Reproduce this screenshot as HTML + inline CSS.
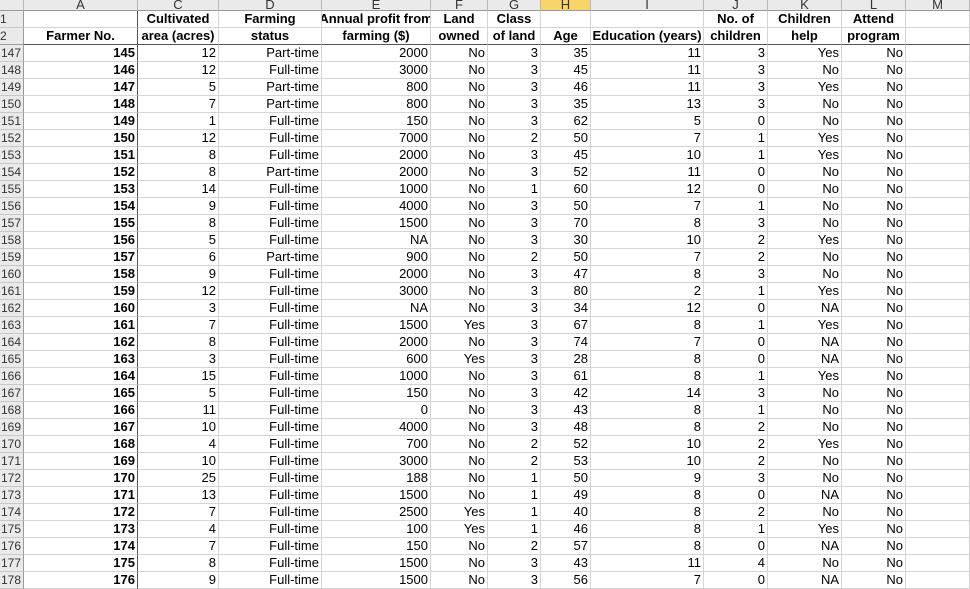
<!DOCTYPE html>
<html><head><meta charset="utf-8"><style>
*{margin:0;padding:0}
body{width:970px;height:589px;overflow:hidden;background:#fff;font-family:"Liberation Sans",Arial,sans-serif;font-size:13px;color:#000}
table{border-collapse:separate;border-spacing:0;table-layout:fixed;width:970px}
td{border-right:1px solid #d4d4d4;border-bottom:1px solid #d4d4d4;height:16px;line-height:16px;padding:0 2px 0 0;text-align:right;white-space:nowrap;overflow:hidden;box-sizing:content-box}
tr.ch td{height:10px;line-height:10px;background:#eaeaea;color:#333;text-align:center;font-size:13px;border-right:1px solid #b8b8b8;border-bottom:1px solid #9a9a9a;padding:0}
td.rh{background:#eaeaea;color:#333;text-align:left;padding:0 0 0 1px;border-right:1px solid #9a9a9a;border-bottom:1px solid #c8c8c8;font-size:12px}
tr.h td{font-weight:bold;text-align:center;padding:0}
tr.h2 td{border-bottom:1px solid #555}
tr.h2 td.rh{border-bottom:1px solid #9a9a9a}
td.a{font-weight:bold;border-right:1px solid #555}
td.sel{background:#f9d46b !important}
.c{display:flex;justify-content:center;overflow:hidden}
</style></head><body>
<table>
<colgroup><col style="width:24px"><col style="width:114px"><col style="width:81px"><col style="width:103px"><col style="width:109px"><col style="width:57px"><col style="width:53px"><col style="width:50px"><col style="width:113px"><col style="width:64px"><col style="width:74px"><col style="width:64px"><col style="width:64px"></colgroup>
<tr class="ch"><td></td><td>A</td><td>C</td><td>D</td><td>E</td><td>F</td><td>G</td><td class="sel">H</td><td>I</td><td>J</td><td>K</td><td>L</td><td>M</td></tr>
<tr class="h"><td class="rh" style="font-weight:normal;text-align:left">1</td><td class="a"></td><td>Cultivated</td><td>Farming</td><td><div class="c"><span>Annual profit from</span></div></td><td>Land</td><td>Class</td><td></td><td></td><td>No. of</td><td>Children</td><td>Attend</td><td></td></tr>
<tr class="h h2"><td class="rh" style="font-weight:normal;text-align:left">2</td><td class="a">Farmer No.</td><td>area (acres)</td><td>status</td><td>farming ($)</td><td>owned</td><td>of land</td><td>Age</td><td>Education (years)</td><td>children</td><td>help</td><td>program</td><td></td></tr>
<tr><td class="rh">147</td><td class="a">145</td><td>12</td><td>Part-time</td><td>2000</td><td>No</td><td>3</td><td>35</td><td>11</td><td>3</td><td>Yes</td><td>No</td><td></td></tr>
<tr><td class="rh">148</td><td class="a">146</td><td>12</td><td>Full-time</td><td>3000</td><td>No</td><td>3</td><td>45</td><td>11</td><td>3</td><td>No</td><td>No</td><td></td></tr>
<tr><td class="rh">149</td><td class="a">147</td><td>5</td><td>Part-time</td><td>800</td><td>No</td><td>3</td><td>46</td><td>11</td><td>3</td><td>Yes</td><td>No</td><td></td></tr>
<tr><td class="rh">150</td><td class="a">148</td><td>7</td><td>Part-time</td><td>800</td><td>No</td><td>3</td><td>35</td><td>13</td><td>3</td><td>No</td><td>No</td><td></td></tr>
<tr><td class="rh">151</td><td class="a">149</td><td>1</td><td>Full-time</td><td>150</td><td>No</td><td>3</td><td>62</td><td>5</td><td>0</td><td>No</td><td>No</td><td></td></tr>
<tr><td class="rh">152</td><td class="a">150</td><td>12</td><td>Full-time</td><td>7000</td><td>No</td><td>2</td><td>50</td><td>7</td><td>1</td><td>Yes</td><td>No</td><td></td></tr>
<tr><td class="rh">153</td><td class="a">151</td><td>8</td><td>Full-time</td><td>2000</td><td>No</td><td>3</td><td>45</td><td>10</td><td>1</td><td>Yes</td><td>No</td><td></td></tr>
<tr><td class="rh">154</td><td class="a">152</td><td>8</td><td>Part-time</td><td>2000</td><td>No</td><td>3</td><td>52</td><td>11</td><td>0</td><td>No</td><td>No</td><td></td></tr>
<tr><td class="rh">155</td><td class="a">153</td><td>14</td><td>Full-time</td><td>1000</td><td>No</td><td>1</td><td>60</td><td>12</td><td>0</td><td>No</td><td>No</td><td></td></tr>
<tr><td class="rh">156</td><td class="a">154</td><td>9</td><td>Full-time</td><td>4000</td><td>No</td><td>3</td><td>50</td><td>7</td><td>1</td><td>No</td><td>No</td><td></td></tr>
<tr><td class="rh">157</td><td class="a">155</td><td>8</td><td>Full-time</td><td>1500</td><td>No</td><td>3</td><td>70</td><td>8</td><td>3</td><td>No</td><td>No</td><td></td></tr>
<tr><td class="rh">158</td><td class="a">156</td><td>5</td><td>Full-time</td><td>NA</td><td>No</td><td>3</td><td>30</td><td>10</td><td>2</td><td>Yes</td><td>No</td><td></td></tr>
<tr><td class="rh">159</td><td class="a">157</td><td>6</td><td>Part-time</td><td>900</td><td>No</td><td>2</td><td>50</td><td>7</td><td>2</td><td>No</td><td>No</td><td></td></tr>
<tr><td class="rh">160</td><td class="a">158</td><td>9</td><td>Full-time</td><td>2000</td><td>No</td><td>3</td><td>47</td><td>8</td><td>3</td><td>No</td><td>No</td><td></td></tr>
<tr><td class="rh">161</td><td class="a">159</td><td>12</td><td>Full-time</td><td>3000</td><td>No</td><td>3</td><td>80</td><td>2</td><td>1</td><td>Yes</td><td>No</td><td></td></tr>
<tr><td class="rh">162</td><td class="a">160</td><td>3</td><td>Full-time</td><td>NA</td><td>No</td><td>3</td><td>34</td><td>12</td><td>0</td><td>NA</td><td>No</td><td></td></tr>
<tr><td class="rh">163</td><td class="a">161</td><td>7</td><td>Full-time</td><td>1500</td><td>Yes</td><td>3</td><td>67</td><td>8</td><td>1</td><td>Yes</td><td>No</td><td></td></tr>
<tr><td class="rh">164</td><td class="a">162</td><td>8</td><td>Full-time</td><td>2000</td><td>No</td><td>3</td><td>74</td><td>7</td><td>0</td><td>NA</td><td>No</td><td></td></tr>
<tr><td class="rh">165</td><td class="a">163</td><td>3</td><td>Full-time</td><td>600</td><td>Yes</td><td>3</td><td>28</td><td>8</td><td>0</td><td>NA</td><td>No</td><td></td></tr>
<tr><td class="rh">166</td><td class="a">164</td><td>15</td><td>Full-time</td><td>1000</td><td>No</td><td>3</td><td>61</td><td>8</td><td>1</td><td>Yes</td><td>No</td><td></td></tr>
<tr><td class="rh">167</td><td class="a">165</td><td>5</td><td>Full-time</td><td>150</td><td>No</td><td>3</td><td>42</td><td>14</td><td>3</td><td>No</td><td>No</td><td></td></tr>
<tr><td class="rh">168</td><td class="a">166</td><td>11</td><td>Full-time</td><td>0</td><td>No</td><td>3</td><td>43</td><td>8</td><td>1</td><td>No</td><td>No</td><td></td></tr>
<tr><td class="rh">169</td><td class="a">167</td><td>10</td><td>Full-time</td><td>4000</td><td>No</td><td>3</td><td>48</td><td>8</td><td>2</td><td>No</td><td>No</td><td></td></tr>
<tr><td class="rh">170</td><td class="a">168</td><td>4</td><td>Full-time</td><td>700</td><td>No</td><td>2</td><td>52</td><td>10</td><td>2</td><td>Yes</td><td>No</td><td></td></tr>
<tr><td class="rh">171</td><td class="a">169</td><td>10</td><td>Full-time</td><td>3000</td><td>No</td><td>2</td><td>53</td><td>10</td><td>2</td><td>No</td><td>No</td><td></td></tr>
<tr><td class="rh">172</td><td class="a">170</td><td>25</td><td>Full-time</td><td>188</td><td>No</td><td>1</td><td>50</td><td>9</td><td>3</td><td>No</td><td>No</td><td></td></tr>
<tr><td class="rh">173</td><td class="a">171</td><td>13</td><td>Full-time</td><td>1500</td><td>No</td><td>1</td><td>49</td><td>8</td><td>0</td><td>NA</td><td>No</td><td></td></tr>
<tr><td class="rh">174</td><td class="a">172</td><td>7</td><td>Full-time</td><td>2500</td><td>Yes</td><td>1</td><td>40</td><td>8</td><td>2</td><td>No</td><td>No</td><td></td></tr>
<tr><td class="rh">175</td><td class="a">173</td><td>4</td><td>Full-time</td><td>100</td><td>Yes</td><td>1</td><td>46</td><td>8</td><td>1</td><td>Yes</td><td>No</td><td></td></tr>
<tr><td class="rh">176</td><td class="a">174</td><td>7</td><td>Full-time</td><td>150</td><td>No</td><td>2</td><td>57</td><td>8</td><td>0</td><td>NA</td><td>No</td><td></td></tr>
<tr><td class="rh">177</td><td class="a">175</td><td>8</td><td>Full-time</td><td>1500</td><td>No</td><td>3</td><td>43</td><td>11</td><td>4</td><td>No</td><td>No</td><td></td></tr>
<tr><td class="rh">178</td><td class="a">176</td><td>9</td><td>Full-time</td><td>1500</td><td>No</td><td>3</td><td>56</td><td>7</td><td>0</td><td>NA</td><td>No</td><td></td></tr>
</table>
</body></html>
